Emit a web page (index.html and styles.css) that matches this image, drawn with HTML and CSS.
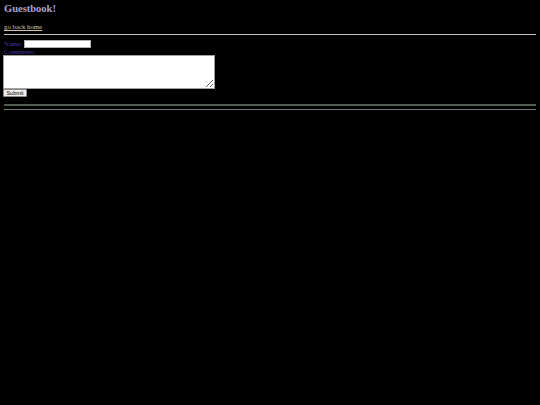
FILE: index.html
```html
<!DOCTYPE html>
<html>
<head>
<meta charset="utf-8">
<title>Guestbook!</title>
<link rel="stylesheet" href="styles.css">
</head>
<body>
<h1 class="title">Guestbook!</h1>
<p class="nav"><a class="home" href="#">go back home</a></p>
<div class="rule"></div>
<form class="book">
  <div class="row"><span class="label">Name:</span><input class="name" type="text"></div>
  <div class="label line">Comments:</div>
  <textarea class="comments"></textarea>
  <div class="actions"><button class="submit" type="button">Submit</button></div>
</form>
<div class="rule dark"></div>
<div class="rule light"></div>
</body>
</html>
```
FILE: styles.css
```css
html, body { background: #000; }
body {
  margin: 3px;
  font-family: "Liberation Serif", "Times New Roman", serif;
  font-size: 6.8px;
  color: #4536a0;
}
.title {
  margin: 0 0 0 1px;
  font-size: 10.5px;
  line-height: 12px;
  font-weight: bold;
  color: #a4a4d4;
}
.nav {
  margin: 8px 0 0 1px;
  line-height: 8px;
}
.home { color: #cfc3a3; text-decoration: underline; }
.rule {
  margin-top: 3px;
  height: 1px;
  background: #c4c4c4;
  margin-left: 1px;
  margin-right: 1px;
}
.book { margin: 4px 0 0 0; display: flex; flex-direction: column; align-items: flex-start; }
.row { display: flex; align-items: center; height: 9px; margin-left: 1px; }
.label { line-height: 8px; }
.line { margin-left: 1px; line-height: 7px; }
.name {
  margin: 0 0 0 2px;
  width: 65px;
  height: 6px;
  padding: 0;
  border: 1px solid #b0b0b0;
  background: #fff;
  box-sizing: content-box;
}
.comments {
  margin: 0;
  width: 210px;
  height: 32px;
  padding: 0;
  border: 1px solid #a0a0a0;
  background: #fff;
  resize: both;
  box-sizing: content-box;
}
.actions { margin: 0; }
.submit {
  margin: 0;
  width: 24px;
  height: 8px;
  padding: 0;
  font-family: "Liberation Sans", Arial, sans-serif;
  font-size: 5.5px;
  line-height: 6px;
  color: #000;
  background: #efefef;
  border: 1px solid #8a8a8a;
  border-radius: 1px;
}
.rule.dark { margin-top: 7px; height: 2px; background: #4e5c4e; }
.rule.light { margin-top: 3px; height: 1px; background: #6e7c6e; }
```
